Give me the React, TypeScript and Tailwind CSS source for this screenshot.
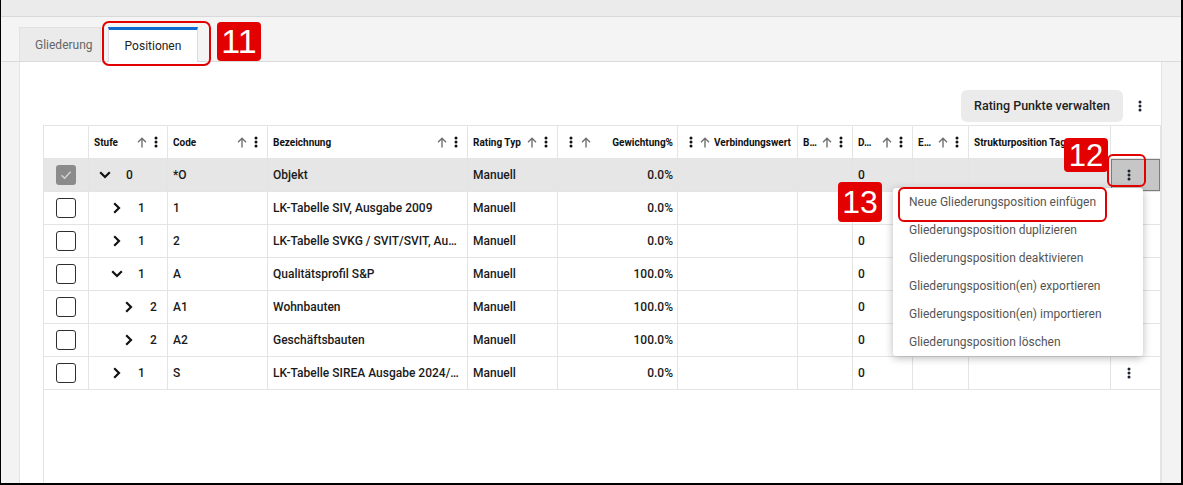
import React from "react";

const Kebab = ({ className = "" }: { className?: string }) => (
  <svg width="4" height="12" viewBox="0 0 4 12" className={`shrink-0 ${className}`}>
    <circle cx="2" cy="2" r="1.5" fill="currentColor" />
    <circle cx="2" cy="6" r="1.5" fill="currentColor" />
    <circle cx="2" cy="10" r="1.5" fill="currentColor" />
  </svg>
);

const ArrowUp = ({ className = "" }: { className?: string }) => (
  <svg width="10" height="11" viewBox="0 0 10 11" fill="none" stroke="#707070" strokeWidth="1.4" className={`shrink-0 ${className}`}>
    <path d="M5 10.6V1.4M1 5.3L5 1.3L9 5.3" />
  </svg>
);

const ChevronDown = () => (
  <svg width="12" height="8" viewBox="0 0 12 8" fill="none" stroke="#111" strokeWidth="2.2">
    <path d="M1.2 1.2L6 6L10.8 1.2" />
  </svg>
);

const ChevronRight = () => (
  <svg width="8" height="12" viewBox="0 0 8 12" fill="none" stroke="#111" strokeWidth="2.2">
    <path d="M1.2 1.2L6 6L1.2 10.8" />
  </svg>
);

const W = [
  "w-[45px]",
  "w-[79px]",
  "w-[100px]",
  "w-[200px]",
  "w-[90px]",
  "w-[120px]",
  "w-[120px]",
  "w-[55px]",
  "w-[60px]",
  "w-[56px]",
  "w-[142px]",
  "w-[49px]",
];

const cell = (i: number) =>
  `shrink-0 h-full ${W[i]} ${i < 11 ? "border-r border-[#e4e4e4]" : ""}`;

const LVL = ["pl-[8px]", "pl-[20px]", "pl-[32px]"];

type Row = {
  lvl: number;
  exp: "down" | "right";
  stufe: string;
  code: string;
  bez: string;
  w: string;
  d: string;
  selected?: boolean;
  kebab?: boolean;
};

const rows: Row[] = [
  { lvl: 0, exp: "down", stufe: "0", code: "*O", bez: "Objekt", w: "0.0%", d: "0", selected: true },
  { lvl: 1, exp: "right", stufe: "1", code: "1", bez: "LK-Tabelle SIV, Ausgabe 2009", w: "0.0%", d: "" },
  { lvl: 1, exp: "right", stufe: "1", code: "2", bez: "LK-Tabelle SVKG / SVIT/SVIT, Au…", w: "0.0%", d: "0" },
  { lvl: 1, exp: "down", stufe: "1", code: "A", bez: "Qualitätsprofil S&P", w: "100.0%", d: "0" },
  { lvl: 2, exp: "right", stufe: "2", code: "A1", bez: "Wohnbauten", w: "100.0%", d: "0" },
  { lvl: 2, exp: "right", stufe: "2", code: "A2", bez: "Geschäftsbauten", w: "100.0%", d: "0" },
  { lvl: 1, exp: "right", stufe: "1", code: "S", bez: "LK-Tabelle SIREA Ausgabe 2024/…", w: "0.0%", d: "0", kebab: true },
];

const LeftHead = ({ label, i }: { label: string; i: number }) => (
  <div className={cell(i)}>
    <div className="flex items-center h-full pl-[5px] pr-[9px]">
      <span className="flex-1 min-w-0 truncate">{label}</span>
      <ArrowUp />
      <Kebab className="ml-[7px] text-[#111]" />
    </div>
  </div>
);

const menuItems = [
  "Neue Gliederungsposition einfügen",
  "Gliederungsposition duplizieren",
  "Gliederungsposition deaktivieren",
  "Gliederungsposition(en) exportieren",
  "Gliederungsposition(en) importieren",
  "Gliederungsposition löschen",
];

const badge =
  "absolute bg-[#e30000] rounded-[4px] text-white flex justify-center [font-family:Liberation_Sans,Arial,sans-serif]";

export default function App() {
  return (
    <div className="relative w-[1183px] h-[485px] overflow-hidden [font-family:Roboto,sans-serif]">
      <div className="w-full h-full flex flex-col bg-[#f3f3f3] border-l border-r-2 border-b-2 border-black">
        {/* top strip */}
        <div className="h-[17px] shrink-0 bg-[#ebebeb] border-b border-[#d9d9d9]" />
        {/* tab bar */}
        <div className="h-[45px] shrink-0 bg-[#f4f4f4] border-b border-[#dadada] flex items-end pl-[18px] gap-[7px]">
          <div className="w-[82px] h-[34px] bg-[#ebebeb] border-x border-t border-[#e2e2e2] flex items-center pl-[15px] text-[12px] text-[#666]">
            Gliederung
          </div>
          <div className="w-[90px] h-[35px] -mb-px bg-white border-t-[3px] border-t-[#0b6bcf] border-x border-x-[#dcdcdc] flex items-center justify-center text-[12px] text-[#222]">
            Positionen
          </div>
        </div>
        {/* body */}
        <div className="flex-1 flex min-h-0">
          <div className="w-[18px] shrink-0" />
          <div className="w-[1143px] shrink-0 bg-white border-x border-[#e3e3e3] flex flex-col">
            <div className="mt-[28px] h-[32px] shrink-0 flex items-center justify-end pr-[19px]">
              <div className="h-[32px] w-[162px] rounded-[6px] bg-[#ebebeb] text-[12.5px] font-medium text-[#222] flex items-center justify-center">
                Rating Punkte verwalten
              </div>
              <Kebab className="ml-[15px] text-[#1c2233]" />
            </div>
            <div className="mt-[3px] ml-[23px] w-[1118px] flex-1 border-x border-t border-[#e4e4e4]">
              {/* header */}
              <div className="flex h-[33px] border-b border-[#e4e4e4] text-[10px] font-bold text-[#111]">
                <div className={cell(0)} />
                <LeftHead label="Stufe" i={1} />
                <LeftHead label="Code" i={2} />
                <LeftHead label="Bezeichnung" i={3} />
                <LeftHead label="Rating Typ" i={4} />
                <div className={cell(5)}>
                  <div className="flex items-center h-full pl-[11px] pr-[4px]">
                    <Kebab className="text-[#111]" />
                    <ArrowUp className="ml-[8px]" />
                    <span className="flex-1 text-right">Gewichtung%</span>
                  </div>
                </div>
                <div className={cell(6)}>
                  <div className="flex items-center h-full pl-[11px] pr-[3px]">
                    <Kebab className="text-[#111]" />
                    <ArrowUp className="ml-[7px]" />
                    <span className="flex-1 min-w-0 ml-[4px] whitespace-nowrap overflow-hidden">Verbindungswert</span>
                  </div>
                </div>
                <LeftHead label="B…" i={7} />
                <LeftHead label="D…" i={8} />
                <LeftHead label="E…" i={9} />
                <div className={cell(10)}>
                  <div className="flex items-center h-full pl-[5px] whitespace-nowrap overflow-hidden">
                    Strukturposition Tags
                  </div>
                </div>
                <div className={cell(11)} />
              </div>
              {/* rows */}
              {rows.map((r, idx) => (
                <div
                  key={idx}
                  className={`flex h-[33px] border-b border-[#e4e4e4] text-[12px] font-medium text-[#1a1a1a] ${
                    r.selected ? "bg-[#e6e6e6]" : "bg-white"
                  }`}
                >
                  <div className={`${cell(0)} flex items-center justify-center`}>
                    {r.selected ? (
                      <div className="w-[20px] h-[20px] rounded-[3px] bg-[#8b8b8b] flex items-center justify-center">
                        <svg width="14" height="14" viewBox="0 0 14 14" fill="none" stroke="#d4d4d4" strokeWidth="1.4">
                          <path d="M2.5 7.3L5.6 10.3L11.6 3.8" />
                        </svg>
                      </div>
                    ) : (
                      <div className="w-[20px] h-[20px] rounded-[3px] border-[1.5px] border-[#2e2e2e] bg-white" />
                    )}
                  </div>
                  <div className={cell(1)}>
                    <div className={`flex items-center h-full ${LVL[r.lvl]}`}>
                      <div className="w-[16px] flex justify-center">
                        {r.exp === "down" ? <ChevronDown /> : <ChevronRight />}
                      </div>
                      <span className="ml-[13px]">{r.stufe}</span>
                    </div>
                  </div>
                  <div className={`${cell(2)} flex items-center pl-[5px]`}>{r.code}</div>
                  <div className={`${cell(3)} flex items-center pl-[5px] whitespace-nowrap overflow-hidden`}>{r.bez}</div>
                  <div className={`${cell(4)} flex items-center pl-[5px]`}>Manuell</div>
                  <div className={`${cell(5)} flex items-center justify-end pr-[4px]`}>{r.w}</div>
                  <div className={cell(6)} />
                  <div className={cell(7)} />
                  <div className={`${cell(8)} flex items-center pl-[5px]`}>{r.d}</div>
                  <div className={cell(9)} />
                  <div className={cell(10)} />
                  <div className={cell(11)}>
                    {r.selected ? (
                      <div className="w-full h-full bg-[#c6c6c6] border border-[#7c7c7c] flex items-center pl-[15px]">
                        <Kebab className="text-[#1c2233]" />
                      </div>
                    ) : r.kebab ? (
                      <div className="w-full h-full flex items-center pl-[16px]">
                        <Kebab className="text-[#1c2233]" />
                      </div>
                    ) : null}
                  </div>
                </div>
              ))}
            </div>
          </div>
        </div>
      </div>

      {/* context menu */}
      <div className="absolute left-[893px] top-[188px] w-[250px] h-[168px] bg-white rounded-[3px] shadow-[0_2px_8px_rgba(0,0,0,0.28)] flex flex-col">
        {menuItems.map((m) => (
          <div key={m} className="h-[28px] flex items-center pl-[16px] text-[12px] text-[#555] whitespace-nowrap">
            {m}
          </div>
        ))}
      </div>

      {/* annotations */}
      <div className="absolute left-[102px] top-[21px] w-[109px] h-[45px] border-[2.5px] border-[#e30000] rounded-[7px]" />
      <div className={`${badge} left-[217px] top-[22px] w-[44px] h-[39px] text-[34px] leading-[39px]`}>11</div>

      <div className={`${badge} left-[1064px] top-[138px] w-[44px] h-[34px] text-[31px] leading-[35px]`}>12</div>
      <div className="absolute left-[1107px] top-[154px] w-[39px] h-[33px] border-[2.5px] border-[#e30000] rounded-[6px]" />

      <div className="absolute left-[898px] top-[187px] w-[209px] h-[35px] border-[2.5px] border-[#e30000] rounded-[6px]" />
      <div className={`${badge} left-[838px] top-[182px] w-[44px] h-[40px] text-[32px] leading-[40px]`}>13</div>
    </div>
  );
}
